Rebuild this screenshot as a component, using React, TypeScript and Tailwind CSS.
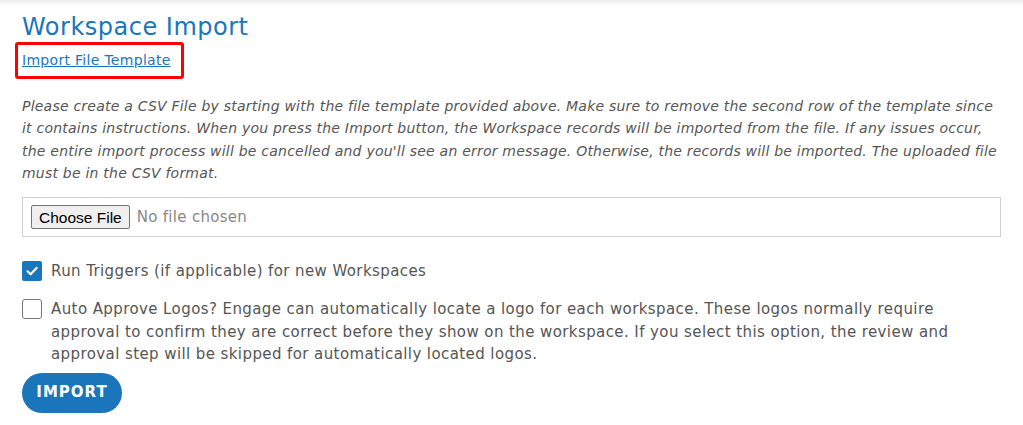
import React from "react";

export default function App() {
  const font = { fontFamily: '"DejaVu Sans", "Open Sans", sans-serif' };
  return (
    <div className="min-h-[425px] w-full bg-white" style={font}>
      <div className="h-[6px] w-full bg-gradient-to-b from-[#ececec] to-white" />
      <div className="px-[22px]">
        <h1 className="mt-[7px] text-[24px] leading-[29px] tracking-[0.5px] text-[#1b75bb]">Workspace Import</h1>
        <div className="-ml-[7px] inline-block rounded-[3px] border-[3px] border-[#ff0000] py-[6px] pl-[4px] pr-[10px]">
          <a href="#" className="block text-[14px] leading-[19px] tracking-[0.3px] text-[#1b75bb] underline">Import File Template</a>
        </div>
        <p className="mt-[16px] text-[14px] italic leading-[22.3px] tracking-[0.22px] text-[#555]">
          Please create a CSV File by starting with the file template provided above. Make sure to remove the second row of the template since it contains instructions. When you press the Import button, the Workspace records will be imported from the file. If any issues occur, the entire import process will be cancelled and you'll see an error message. Otherwise, the records will be imported. The uploaded file must be in the CSV format.
        </p>
        <div className="mt-[13px] flex h-[40px] items-center border border-[#cfcfcf] px-[8px]">
          <span
            className="flex h-[24px] items-center rounded-[2px] border border-[#767676] bg-[#efefef] px-[7px] text-[15.5px] text-black"
            style={{ fontFamily: '"Liberation Sans", Arial, sans-serif' }}
          >
            Choose File
          </span>
          <span className="ml-[7px] text-[15px] tracking-[0.3px] text-[#888]">No file chosen</span>
        </div>
        <label className="mt-[23px] flex items-center gap-[9px]">
          <span className="flex h-[20px] w-[20px] items-center justify-center rounded-[2px] bg-[#1b75bb]">
            <svg width="14" height="14" viewBox="0 0 14 14" fill="none">
              <path d="M2.5 7.3 L5.6 10.2 L11.6 3.9" stroke="white" strokeWidth="2.2" strokeLinecap="round" strokeLinejoin="round" />
            </svg>
          </span>
          <span className="text-[15px] leading-[22px] tracking-[0.4px] text-[#555]">Run Triggers (if applicable) for new Workspaces</span>
        </label>
        <label className="mt-[16px] flex items-start gap-[9px]">
          <span className="mt-[1px] h-[20px] w-[20px] shrink-0 rounded-[3px] border border-[#777] bg-white" />
          <span className="text-[15px] leading-[22.5px] tracking-[0.41px] text-[#555]">
            Auto Approve Logos? Engage can automatically locate a logo for each workspace. These logos normally require approval to confirm they are correct before they show on the workspace. If you select this option, the review and approval step will be skipped for automatically located logos.
          </span>
        </label>
        <button className="mt-[7px] flex h-[40px] w-[100px] items-center justify-center rounded-full bg-[#1b75bb] text-[15px] font-bold tracking-[1px] text-white">
          IMPORT
        </button>
      </div>
    </div>
  );
}
